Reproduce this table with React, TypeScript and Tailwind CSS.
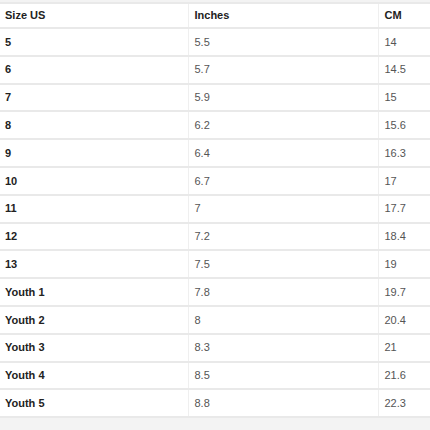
const rows: [string, string, string][] = [
  ["5", "5.5", "14"],
  ["6", "5.7", "14.5"],
  ["7", "5.9", "15"],
  ["8", "6.2", "15.6"],
  ["9", "6.4", "16.3"],
  ["10", "6.7", "17"],
  ["11", "7", "17.7"],
  ["12", "7.2", "18.4"],
  ["13", "7.5", "19"],
  ["Youth 1", "7.8", "19.7"],
  ["Youth 2", "8", "20.4"],
  ["Youth 3", "8.3", "21"],
  ["Youth 4", "8.5", "21.6"],
  ["Youth 5", "8.8", "22.3"],
]

export default function App() {
  return (
    <div className="h-[430px] w-[430px] bg-[#f3f3f3] pt-[2px] font-['Liberation_Sans',Arial,sans-serif] text-[11px]">
      <table className="w-full border-collapse bg-white">
        <thead>
          <tr className="h-[25px] border-y-2 border-[#e9e9e9]">
            <th className="w-[188px] border-r border-[#efefef] pl-[5px] text-left font-bold text-[#222]">
              Size US
            </th>
            <th className="w-[190px] border-r border-[#efefef] pl-[6px] text-left font-bold text-[#222]">
              Inches
            </th>
            <th className="pl-[6px] text-left font-bold text-[#222]">CM</th>
          </tr>
        </thead>
        <tbody>
          {rows.map(([size, inches, cm]) => (
            <tr key={size} className="h-[27.8px] border-b-2 border-[#e9e9e9]">
              <td className="border-r border-[#efefef] pl-[5px] font-bold text-[#222]">
                {size}
              </td>
              <td className="border-r border-[#efefef] pl-[6px] text-[#555]">
                {inches}
              </td>
              <td className="pl-[6px] text-[#555]">{cm}</td>
            </tr>
          ))}
        </tbody>
      </table>
    </div>
  )
}
